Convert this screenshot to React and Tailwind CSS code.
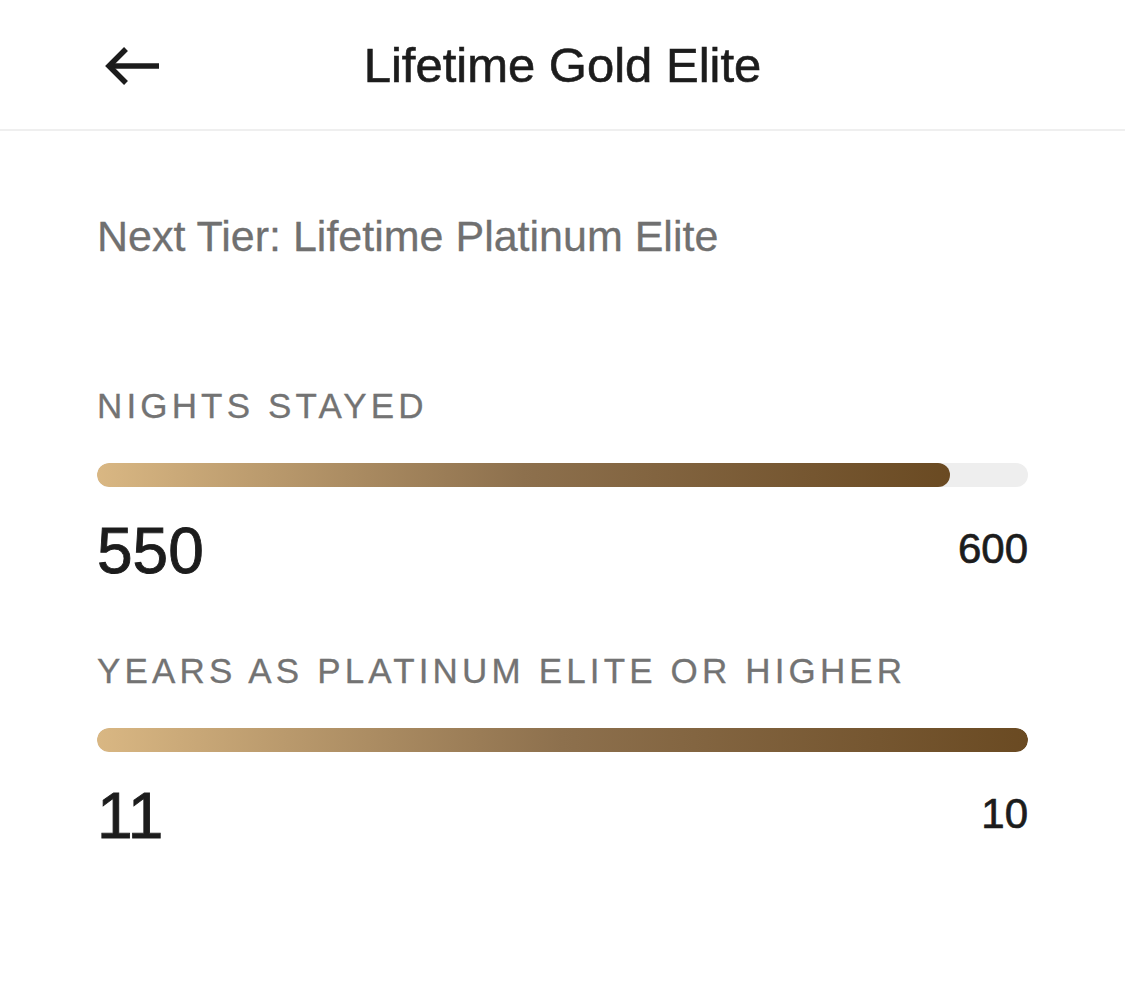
const metrics = [
  { label: 'NIGHTS STAYED', value: 550, target: 600 },
  { label: 'YEARS AS PLATINUM ELITE OR HIGHER', value: 11, target: 10 },
];

const ProgressBar = ({ value, target }) => {
  const pct = Math.min(100, (value / target) * 100);
  return (
    <div className="h-[24px] w-full rounded-full bg-[#eeeeee] overflow-hidden">
      <div
        className="h-full rounded-full bg-gradient-to-r from-[#d9b783] via-[#8d704d] via-50% to-[#6a4a22]"
        style={{ width: `${pct}%` }}
      />
    </div>
  );
};

const App = () => {
  return (
    <div
      className="min-h-screen w-full bg-white text-[#1c1c1c]"
      style={{ fontFamily: '"Liberation Sans", Arial, sans-serif' }}
    >
      {/* Header */}
      <div className="relative flex h-[131px] items-center justify-center border-b-2 border-[#efefef]">
        <button className="absolute left-[103px] top-[46px]">
          <svg width="58" height="40" viewBox="0 0 58 40" fill="none">
            <path d="M56 20H6" stroke="#1c1c1c" strokeWidth="5.5" />
            <path d="M23 3L6 20L23 37" stroke="#1c1c1c" strokeWidth="5.5" strokeLinejoin="miter" />
          </svg>
        </button>
        <h1 className="pt-[2px] text-[49px] leading-none font-normal [-webkit-text-stroke:0.6px_#1c1c1c]">
          Lifetime Gold Elite
        </h1>
      </div>

      {/* Body */}
      <div className="px-[97px]">
        <p className="mt-[84px] text-[43px] leading-none text-[#707070] [-webkit-text-stroke:0.3px_#707070]">
          Next Tier: Lifetime Platinum Elite
        </p>

        <div className="mt-[130px]">
          {metrics.map((m, i) => (
            <div key={m.label} className={i > 0 ? 'mt-[70px]' : ''}>
              <div className="text-[35px] leading-none tracking-[4.15px] text-[#737373] [-webkit-text-stroke:0.3px_#737373]">
                {m.label}
              </div>
              <div className="mt-[40px]">
                <ProgressBar value={m.value} target={m.target} />
              </div>
              <div className="mt-[32px] flex items-center justify-between">
                <span className="text-[64px] leading-none [-webkit-text-stroke:0.9px_#1c1c1c]">{m.value}</span>
                <span className="mb-1 text-[42px] leading-none [-webkit-text-stroke:0.7px_#1c1c1c]">{m.target}</span>
              </div>
            </div>
          ))}
        </div>
      </div>
    </div>
  );
};

export default App;
